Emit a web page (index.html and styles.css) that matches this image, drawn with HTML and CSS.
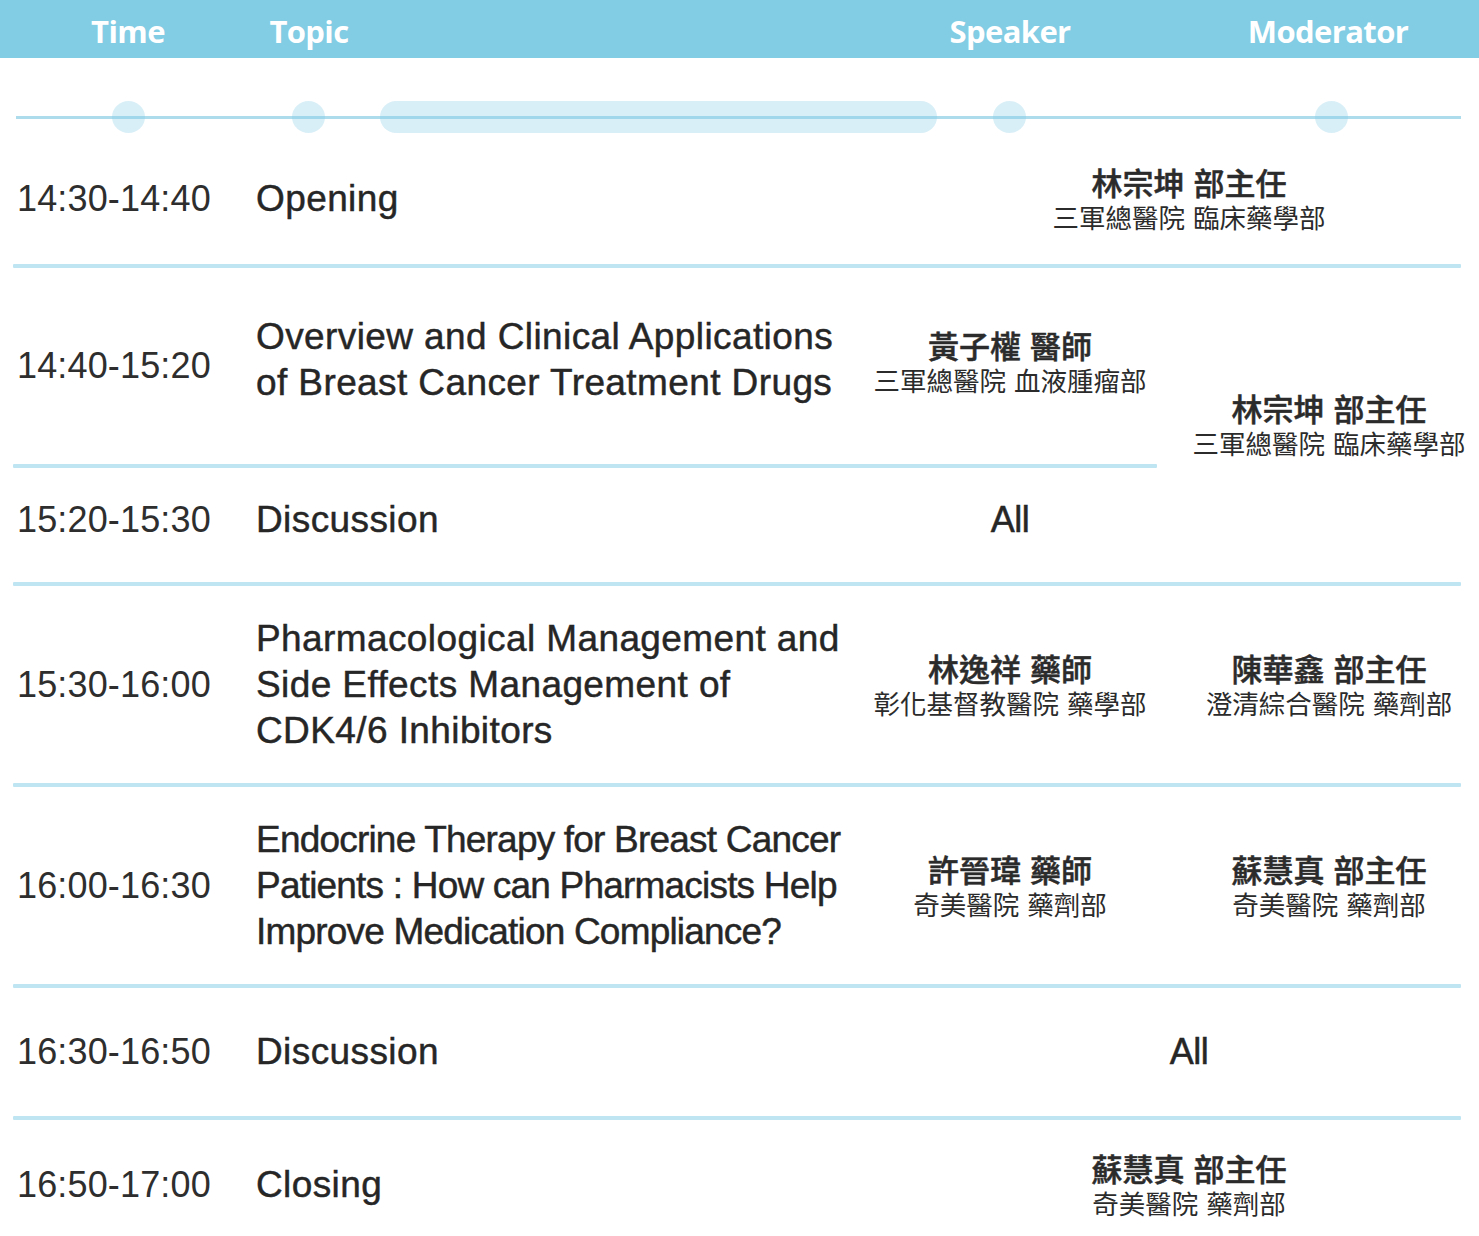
FILE: index.html
```html
<!DOCTYPE html>
<html lang="zh-Hant">
<head>
<meta charset="utf-8">
<title>Agenda</title>
<link rel="stylesheet" href="styles.css">
</head>
<body>
<div class="page">
  <header class="head">
    <div class="hl hl-time">Time</div>
    <div class="hl hl-topic">Topic</div>
    <div class="hl hl-speaker">Speaker</div>
    <div class="hl hl-mod">Moderator</div>
  </header>

  <div class="track">
    <span class="dot dot-time"></span>
    <span class="dot dot-topic"></span>
    <span class="pill"></span>
    <span class="dot dot-speaker"></span>
    <span class="dot dot-mod"></span>
  </div>

  <div class="agenda">
    <!-- row 1 -->
    <div class="cell time r1">14:30-14:40</div>
    <div class="cell topic r1">Opening</div>
    <div class="cell person span2 r1">
      <div class="name">林宗坤 部主任</div>
      <div class="org">三軍總醫院 臨床藥學部</div>
    </div>
    <div class="sep full s1"></div>

    <!-- row 2 -->
    <div class="cell time r2">14:40-15:20</div>
    <div class="cell topic r2 up">Overview and Clinical Applications<br>of Breast Cancer Treatment Drugs</div>
    <div class="cell person speaker r2 up-s">
      <div class="name">黃子權 醫師</div>
      <div class="org">三軍總醫院 血液腫瘤部</div>
    </div>
    <div class="cell person mod r2to3">
      <div class="name">林宗坤 部主任</div>
      <div class="org">三軍總醫院 臨床藥學部</div>
    </div>
    <div class="sep part s2"></div>

    <!-- row 3 -->
    <div class="cell time r3 lift">15:20-15:30</div>
    <div class="cell topic r3 lift">Discussion</div>
    <div class="cell person speaker r3 lift"><div class="all">All</div></div>
    <div class="sep full s3"></div>

    <!-- row 4 -->
    <div class="cell time r4">15:30-16:00</div>
    <div class="cell topic r4">Pharmacological Management and<br>Side Effects Management of<br>CDK4/6 Inhibitors</div>
    <div class="cell person speaker r4">
      <div class="name">林逸祥 藥師</div>
      <div class="org">彰化基督教醫院 藥學部</div>
    </div>
    <div class="cell person mod r4">
      <div class="name">陳華鑫 部主任</div>
      <div class="org">澄清綜合醫院 藥劑部</div>
    </div>
    <div class="sep full s4"></div>

    <!-- row 5 -->
    <div class="cell time r5">16:00-16:30</div>
    <div class="cell topic r5 tight">Endocrine Therapy for Breast Cancer<br>Patients : How can Pharmacists Help<br>Improve Medication Compliance?</div>
    <div class="cell person speaker r5">
      <div class="name">許晉瑋 藥師</div>
      <div class="org">奇美醫院 藥劑部</div>
    </div>
    <div class="cell person mod r5">
      <div class="name">蘇慧真 部主任</div>
      <div class="org">奇美醫院 藥劑部</div>
    </div>
    <div class="sep full s5"></div>

    <!-- row 6 -->
    <div class="cell time r6">16:30-16:50</div>
    <div class="cell topic r6">Discussion</div>
    <div class="cell person span2 r6"><div class="all">All</div></div>
    <div class="sep full s6"></div>

    <!-- row 7 -->
    <div class="cell time r7">16:50-17:00</div>
    <div class="cell topic r7">Closing</div>
    <div class="cell person span2 r7">
      <div class="name">蘇慧真 部主任</div>
      <div class="org">奇美醫院 藥劑部</div>
    </div>
  </div>
</div>
</body>
</html>
```

FILE: styles.css
```css
html, body {
  margin: 0;
  padding: 0;
  background: #ffffff;
  overflow: hidden;
}

.page {
  width: 1479px;
  font-family: "Liberation Sans", Arial, sans-serif;
  color: #2b2b2b;
}

/* ---------- header bar ---------- */
.head {
  height: 58px;
  background: #82cce4;
  display: flex;
  align-items: center;
  box-sizing: border-box;
  padding-top: 3px;
}

.hl {
  font-family: "Open Sans", "Liberation Sans", sans-serif;
  font-weight: 700;
  font-size: 31px;
  letter-spacing: -0.6px;
  color: #ffffff;
  text-align: center;
  flex: none;
}

.hl-time { width: 200px; margin-left: 28px; }
.hl-topic { width: 120px; margin-left: 21px; }
.hl-speaker { width: 200px; margin-left: 541px; }
.hl-mod { width: 240px; margin-left: 98px; }

/* ---------- decorative track ---------- */
.track {
  position: relative;
  display: flex;
  height: 32px;
  margin-top: 43px;
  margin-left: 16px;
  width: 1445px;
}

.track::after {
  content: "";
  position: absolute;
  left: 0;
  right: 0;
  top: 15px;
  height: 3px;
  background: rgba(130, 202, 228, 0.66);
}

.dot {
  flex: none;
  width: 33px;
  height: 32px;
  border-radius: 50%;
  background: #d9eff7;
}

.pill {
  flex: none;
  width: 557px;
  height: 32px;
  border-radius: 16px;
  background: #d9eff7;
}

.dot-time { margin-left: 96px; }
.dot-topic { margin-left: 147px; }
.pill { margin-left: 55px; }
.dot-speaker { margin-left: 56px; }
.dot-mod { margin-left: 289px; }

/* ---------- agenda grid ---------- */
.agenda {
  display: grid;
  margin-left: 13px;
  width: 1448px;
  grid-template-columns: 243px 607px 294px 304px;
  grid-template-rows: 131px 4px 196px 4px 114px 4px 197px 4px 197px 4px 128px 4px 130px;
}

.cell {
  display: flex;
  align-items: center;
  min-width: 0;
}

.time {
  grid-column: 1;
  padding-left: 4px;
  font-size: 36px;
  letter-spacing: 0.15px;
  color: #2e2e2e;
  white-space: nowrap;
}

.topic {
  grid-column: 2;
  font-size: 37px;
  line-height: 46px;
  letter-spacing: 0.4px;
  color: #262626;
  -webkit-text-stroke: 0.45px #262626;
  white-space: nowrap;
}

.topic.tight { letter-spacing: -0.8px; }

.person {
  flex-direction: column;
  justify-content: center;
  align-items: center;
  font-family: "Noto Sans CJK TC", "Noto Sans CJK SC", sans-serif;
  color: #2b2b2b;
  white-space: nowrap;
}

.speaker { grid-column: 3; }
.mod { grid-column: 4; padding-left: 40px; }
.span2 { grid-column: 3 / 5; padding-left: 54px; }

.name {
  font-size: 31px;
  font-weight: 500;
  -webkit-text-stroke: 0.5px #2b2b2b;
  line-height: 35px;
  word-spacing: 2px;
}

.org {
  font-size: 26.5px;
  font-weight: 400;
  line-height: 35px;
  word-spacing: 2px;
}

.all {
  font-family: "Liberation Sans", Arial, sans-serif;
  font-size: 36px;
  color: #262626;
  -webkit-text-stroke: 0.5px #262626;
  letter-spacing: -0.5px;
}

.lift { padding-bottom: 10px; }
.up { padding-bottom: 12px; }
.up-s { padding-bottom: 9px; }

.r1 { grid-row: 1; }
.r2 { grid-row: 3; }
.r3 { grid-row: 5; }
.r2to3 { grid-row: 3 / 6; }
.r4 { grid-row: 7; }
.r5 { grid-row: 9; }
.r6 { grid-row: 11; }
.r7 { grid-row: 13; }

.sep {
  background: #c0e5f2;
  border-radius: 1px;
}

.sep.full { grid-column: 1 / 5; }
.sep.part { grid-column: 1 / 4; }

.s1 { grid-row: 2; }
.s2 { grid-row: 4; }
.s3 { grid-row: 6; }
.s4 { grid-row: 8; }
.s5 { grid-row: 10; }
.s6 { grid-row: 12; }
```
